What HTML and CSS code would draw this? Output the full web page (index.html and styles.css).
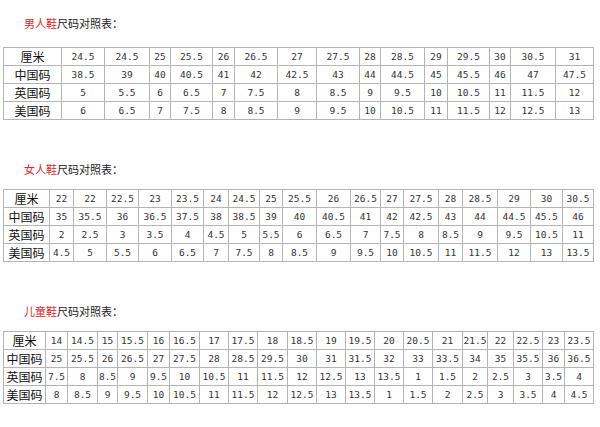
FILE: index.html
```html
<!DOCTYPE html>
<html lang="zh-CN">
<head>
<meta charset="utf-8">
<title>鞋子尺码对照表</title>
<link rel="stylesheet" href="styles.css">
</head>
<body>
<div class="page">
  <section class="chart chart-first">
    <h2 class="chart-title"><span class="accent">男人鞋</span>尺码对照表：</h2>
    <table class="size-table">
      <colgroup>
        <col width="58"><col width="43"><col width="45"><col width="21"><col width="42"><col width="22"><col width="43"><col width="39"><col width="43"><col width="21"><col width="44"><col width="23"><col width="42"><col width="21"><col width="45"><col width="38">
      </colgroup>
      <tr><th>厘米</th><td>24.5</td><td>24.5</td><td>25</td><td>25.5</td><td>26</td><td>26.5</td><td>27</td><td>27.5</td><td>28</td><td>28.5</td><td>29</td><td>29.5</td><td>30</td><td>30.5</td><td>31</td></tr>
      <tr><th>中国码</th><td>38.5</td><td>39</td><td>40</td><td>40.5</td><td>41</td><td>42</td><td>42.5</td><td>43</td><td>44</td><td>44.5</td><td>45</td><td>45.5</td><td>46</td><td>47</td><td>47.5</td></tr>
      <tr><th>英国码</th><td>5</td><td>5.5</td><td>6</td><td>6.5</td><td>7</td><td>7.5</td><td>8</td><td>8.5</td><td>9</td><td>9.5</td><td>10</td><td>10.5</td><td>11</td><td>11.5</td><td>12</td></tr>
      <tr><th>美国码</th><td>6</td><td>6.5</td><td>7</td><td>7.5</td><td>8</td><td>8.5</td><td>9</td><td>9.5</td><td>10</td><td>10.5</td><td>11</td><td>11.5</td><td>12</td><td>12.5</td><td>13</td></tr>
    </table>
  </section>

  <section class="chart">
    <h2 class="chart-title"><span class="accent">女人鞋</span>尺码对照表：</h2>
    <table class="size-table">
      <colgroup>
        <col width="46"><col width="24"><col width="33"><col width="32"><col width="33"><col width="32"><col width="25"><col width="31"><col width="23"><col width="34"><col width="34"><col width="30"><col width="23"><col width="35"><col width="24"><col width="35"><col width="33"><col width="32"><col width="31">
      </colgroup>
      <tr><th>厘米</th><td>22</td><td>22</td><td>22.5</td><td>23</td><td>23.5</td><td>24</td><td>24.5</td><td>25</td><td>25.5</td><td>26</td><td>26.5</td><td>27</td><td>27.5</td><td>28</td><td>28.5</td><td>29</td><td>30</td><td>30.5</td></tr>
      <tr><th>中国码</th><td>35</td><td>35.5</td><td>36</td><td>36.5</td><td>37.5</td><td>38</td><td>38.5</td><td>39</td><td>40</td><td>40.5</td><td>41</td><td>42</td><td>42.5</td><td>43</td><td>44</td><td>44.5</td><td>45.5</td><td>46</td></tr>
      <tr><th>英国码</th><td>2</td><td>2.5</td><td>3</td><td>3.5</td><td>4</td><td>4.5</td><td>5</td><td>5.5</td><td>6</td><td>6.5</td><td>7</td><td>7.5</td><td>8</td><td>8.5</td><td>9</td><td>9.5</td><td>10.5</td><td>11</td></tr>
      <tr><th>美国码</th><td>4.5</td><td>5</td><td>5.5</td><td>6</td><td>6.5</td><td>7</td><td>7.5</td><td>8</td><td>8.5</td><td>9</td><td>9.5</td><td>10</td><td>10.5</td><td>11</td><td>11.5</td><td>12</td><td>13</td><td>13.5</td></tr>
    </table>
  </section>

  <section class="chart">
    <h2 class="chart-title"><span class="accent">儿童鞋</span>尺码对照表：</h2>
    <table class="size-table">
      <colgroup>
        <col width="42"><col width="22"><col width="30"><col width="20"><col width="30"><col width="22"><col width="30"><col width="29"><col width="29"><col width="30"><col width="29"><col width="29"><col width="29"><col width="29"><col width="29"><col width="30"><col width="25"><col width="26"><col width="29"><col width="22"><col width="29">
      </colgroup>
      <tr><th>厘米</th><td>14</td><td>14.5</td><td>15</td><td>15.5</td><td>16</td><td>16.5</td><td>17</td><td>17.5</td><td>18</td><td>18.5</td><td>19</td><td>19.5</td><td>20</td><td>20.5</td><td>21</td><td>21.5</td><td>22</td><td>22.5</td><td>23</td><td>23.5</td></tr>
      <tr><th>中国码</th><td>25</td><td>25.5</td><td>26</td><td>26.5</td><td>27</td><td>27.5</td><td>28</td><td>28.5</td><td>29.5</td><td>30</td><td>31</td><td>31.5</td><td>32</td><td>33</td><td>33.5</td><td>34</td><td>35</td><td>35.5</td><td>36</td><td>36.5</td></tr>
      <tr><th>英国码</th><td>7.5</td><td>8</td><td>8.5</td><td>9</td><td>9.5</td><td>10</td><td>10.5</td><td>11</td><td>11.5</td><td>12</td><td>12.5</td><td>13</td><td>13.5</td><td>1</td><td>1.5</td><td>2</td><td>2.5</td><td>3</td><td>3.5</td><td>4</td></tr>
      <tr><th>美国码</th><td>8</td><td>8.5</td><td>9</td><td>9.5</td><td>10</td><td>10.5</td><td>11</td><td>11.5</td><td>12</td><td>12.5</td><td>13</td><td>13.5</td><td>1</td><td>1.5</td><td>2</td><td>2.5</td><td>3</td><td>3.5</td><td>4</td><td>4.5</td></tr>
    </table>
  </section>
</div>
</body>
</html>
```

FILE: styles.css
```css
html, body {
  margin: 0;
  padding: 0;
  background: #ffffff;
}

.page {
  padding: 13px 0 0 3px;
  font-family: "Noto Sans CJK SC", "Liberation Sans", sans-serif;
  color: #111;
}

.chart {
  margin-top: 39px;
}

.chart-first {
  margin-top: 0;
}

.chart-title {
  margin: 0 0 10px 21px;
  height: 20px;
  line-height: 20px;
  font-size: 11px;
  font-weight: normal;
  color: #1a1a1a;
}

.chart-first .chart-title {
  margin-bottom: 14px;
}

.accent {
  color: #e2262b;
}

.size-table {
  border-collapse: collapse;
  table-layout: fixed;
  width: 591px;
}

.size-table th,
.size-table td {
  border: 1px solid #b4b4b4;
  padding: 0;
  height: 17px;
  line-height: 17px;
  text-align: center;
  white-space: nowrap;
  overflow: hidden;
}

.size-table th {
  font-family: "Noto Sans CJK SC", sans-serif;
  font-size: 12px;
  font-weight: normal;
  color: #111;
}

.size-table td {
  font-family: "DejaVu Sans Mono", monospace;
  font-size: 9.5px;
  color: #333;
}
```
